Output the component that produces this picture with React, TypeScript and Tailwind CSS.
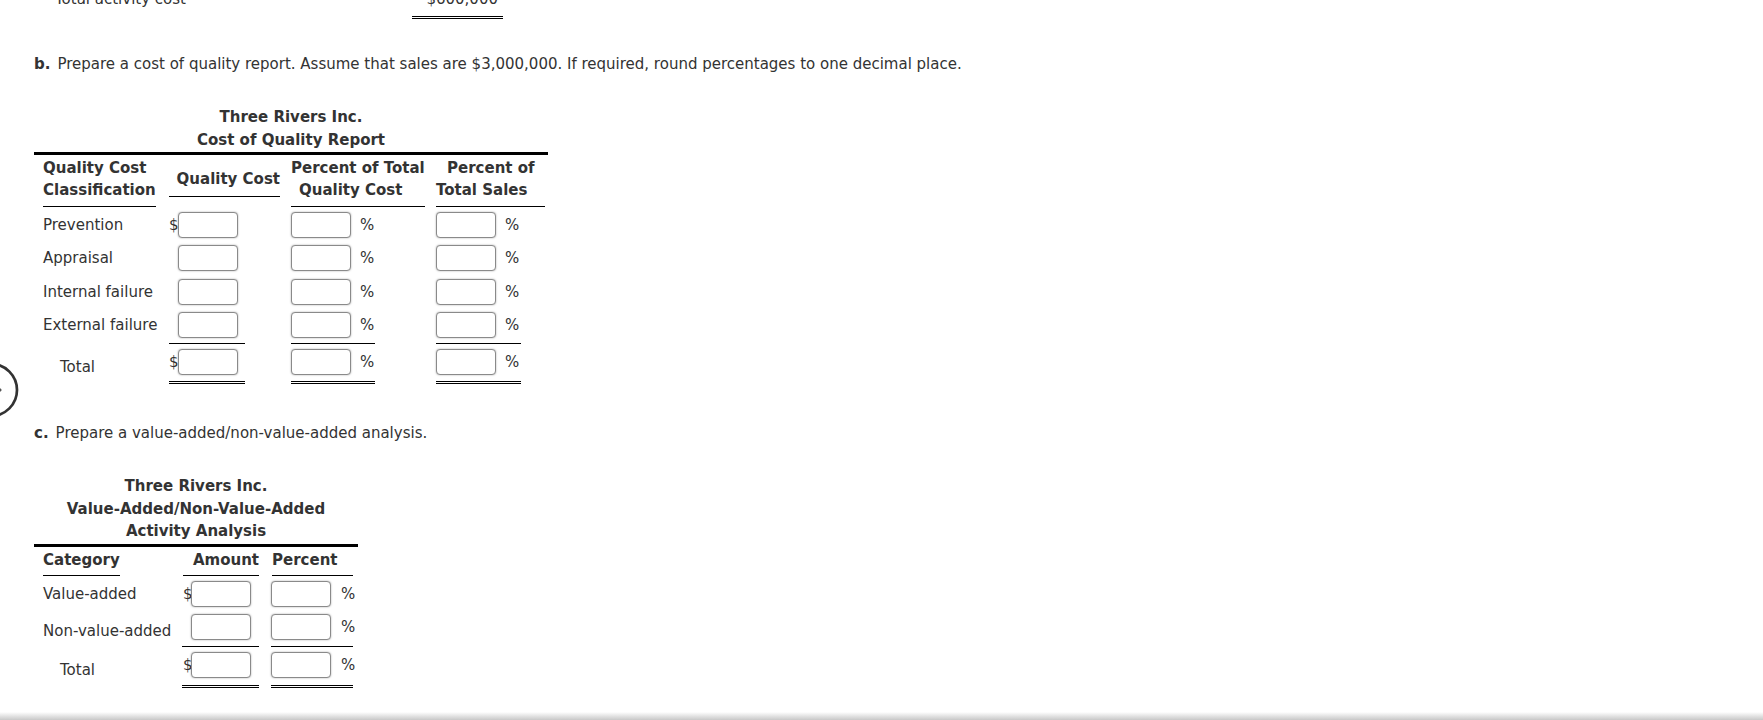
import React from "react";

const inB = "block h-[26px] w-[60px] rounded-[4px] border border-[#8a8a8a] bg-white shadow-[0_0_2px_rgba(0,0,0,0.35)] outline-none";

function BRow({ label, dollar }: { label: string; dollar?: boolean }) {
  return (
    <div className="flex h-[26px] items-center">
      <div className="w-[126px] leading-[20px]">{label}</div>
      <div className="flex w-[122px] items-center">
        <span className="w-[9px] leading-[20px]">{dollar ? "$" : ""}</span>
        <input className={inB} aria-label={label + " quality cost"} />
      </div>
      <div className="flex w-[145px] items-center">
        <input className={inB} aria-label={label + " percent of total quality cost"} />
        <span className="ml-[9px] leading-[20px]">%</span>
      </div>
      <div className="flex w-[112px] items-center">
        <input className={inB} aria-label={label + " percent of total sales"} />
        <span className="ml-[9px] leading-[20px]">%</span>
      </div>
    </div>
  );
}

function CRow({ label, dollar, low }: { label: string; dollar?: boolean; low?: boolean }) {
  return (
    <div className="flex h-[26px] items-center">
      <div className={low ? "w-[140px] pt-[8px] leading-[20px]" : "w-[140px] leading-[20px]"}>{label}</div>
      <div className="flex w-[88px] items-center">
        <span className="w-[8px] leading-[20px]">{dollar ? "$" : ""}</span>
        <input className={inB} aria-label={label + " amount"} />
      </div>
      <div className="flex w-[87px] items-center">
        <input className={inB} aria-label={label + " percent"} />
        <span className="ml-[10px] leading-[20px]">%</span>
      </div>
    </div>
  );
}

export default function App() {
  return (
    <div className="relative h-[720px] overflow-hidden bg-white font-['DejaVu_Sans',sans-serif] text-[15px] text-[#333]">
      {/* partially visible previous line */}
      <div className="-mt-[11px] flex leading-[20px]">
        <span className="ml-[55px] w-[357px]">Total activity cost</span>
        <div className="w-[91px] border-b-[3px] border-double border-black pb-[7px] pr-[5px] text-right">$600,000</div>
      </div>

      {/* b. */}
      <p className="ml-[34px] mt-[35px] leading-[20px]">
        <span className="font-bold">b.</span>
        <span className="ml-[7px]">Prepare a cost of quality report. Assume that sales are $3,000,000. If required, round percentages to one decimal place.</span>
      </p>

      <div className="ml-[34px] mt-[32px] w-[514px]">
        <div className="text-center font-bold leading-[23px]">
          <div>Three Rivers Inc.</div>
          <div>Cost of Quality Report</div>
        </div>
        <div className="border-t-[3px] border-black pl-[9px]">
          {/* header */}
          <div className="flex font-bold">
            <div className="w-[126px] pt-[1.5px]">
              <div className="inline-block border-b border-black pb-[4.5px] leading-[22.5px]">
                <div>Quality Cost</div>
                <div>Classification</div>
              </div>
            </div>
            <div className="w-[122px] pt-[13px]">
              <div className="w-[111px] border-b border-black pb-[5px] text-right leading-[22.5px]">Quality Cost</div>
            </div>
            <div className="w-[145px] pt-[1.5px]">
              <div className="w-[134px] border-b border-black pb-[4.5px] leading-[22.5px]">
                <div>Percent of Total</div>
                <div className="pl-[8px]">Quality Cost</div>
              </div>
            </div>
            <div className="w-[112px] pt-[1.5px]">
              <div className="w-[109px] border-b border-black pb-[4.5px] leading-[22.5px]">
                <div className="pl-[11px]">Percent of</div>
                <div>Total Sales</div>
              </div>
            </div>
          </div>

          {/* rows */}
          <div className="flex flex-col gap-[7.33px] pt-[5px]">
            <BRow label="Prevention" dollar />
            <BRow label="Appraisal" />
            <BRow label="Internal failure" />
            <BRow label="External failure" />
          </div>

          {/* total */}
          <div className="mt-[4.7px] flex items-start">
            <div className="w-[126px] pl-[17px] pt-[14px] leading-[20px]">Total</div>
            <div className="w-[122px]">
              <div className="flex w-[76px] items-center border-y border-t-black border-b-[3px] border-b-black border-double pb-[6px] pt-[5.3px] [border-top-style:solid]">
                <span className="w-[9px] leading-[20px]">$</span>
                <input className={inB} aria-label="Total quality cost" />
              </div>
            </div>
            <div className="w-[145px]">
              <div className="flex w-[84px] items-center border-y border-t-black border-b-[3px] border-b-black border-double pb-[6px] pt-[5.3px] [border-top-style:solid]">
                <input className={inB} aria-label="Total percent of quality cost" />
                <span className="ml-[9px] leading-[20px]">%</span>
              </div>
            </div>
            <div className="w-[112px]">
              <div className="flex w-[85px] items-center border-y border-t-black border-b-[3px] border-b-black border-double pb-[6px] pt-[5.3px] [border-top-style:solid]">
                <input className={inB} aria-label="Total percent of sales" />
                <span className="ml-[9px] leading-[20px]">%</span>
              </div>
            </div>
          </div>
        </div>
      </div>

      {/* c. */}
      <p className="ml-[34px] mt-[39px] leading-[20px]">
        <span className="font-bold">c.</span>
        <span className="ml-[7px]">Prepare a value-added/non-value-added analysis.</span>
      </p>

      <div className="ml-[34px] mt-[32.5px] w-[324px]">
        <div className="pb-[1px] text-center font-bold leading-[22.5px]">
          <div>Three Rivers Inc.</div>
          <div>Value-Added/Non-Value-Added</div>
          <div>Activity Analysis</div>
        </div>
        <div className="border-t-[3px] border-black pl-[9px]">
          <div className="flex pt-[2px] font-bold leading-[22px]">
            <div className="w-[140px]">
              <div className="inline-block border-b border-black pb-[4px]">Category</div>
            </div>
            <div className="w-[88px]">
              <div className="w-[76px] border-b border-black pb-[4px] text-right">Amount</div>
            </div>
            <div className="w-[87px]">
              <div className="ml-[1px] w-[81px] border-b border-black pb-[4px]">Percent</div>
            </div>
          </div>

          <div className="flex flex-col gap-[7px] pt-[5px]">
            <CRow label="Value-added" dollar />
            <CRow label="Non-value-added" low />
          </div>

          <div className="mt-[6px] flex items-start">
            <div className="w-[140px] pl-[17px] pt-[14px] leading-[20px]">Total</div>
            <div className="w-[88px]">
              <div className="-ml-[1px] flex w-[77px] items-center border-y border-t-black border-b-[3px] border-b-black border-double pb-[7px] pl-[1px] pt-[5px] [border-top-style:solid]">
                <span className="w-[8px] leading-[20px]">$</span>
                <input className={inB} aria-label="Total amount" />
              </div>
            </div>
            <div className="w-[87px]">
              <div className="flex w-[82px] items-center border-y border-t-black border-b-[3px] border-b-black border-double pb-[7px] pt-[5px] [border-top-style:solid]">
                <input className={inB} aria-label="Total percent" />
                <span className="ml-[10px] leading-[20px]">%</span>
              </div>
            </div>
          </div>
        </div>
      </div>

      {/* circular nav button partially off-screen */}
      <svg className="absolute left-[-37px] top-[362px]" width="56" height="56" viewBox="0 0 56 56" aria-hidden="true">
        <circle cx="28" cy="28" r="26" fill="white" stroke="#333" strokeWidth="2.7" />
        <polyline points="30,20 37.5,28 30,36" fill="none" stroke="#555" strokeWidth="2" />
      </svg>

      {/* bottom shadow bar */}
      <div className="absolute bottom-0 left-0 right-0 h-[8px] bg-linear-to-b from-white to-[#c8c8c8]" />
    </div>
  );
}
